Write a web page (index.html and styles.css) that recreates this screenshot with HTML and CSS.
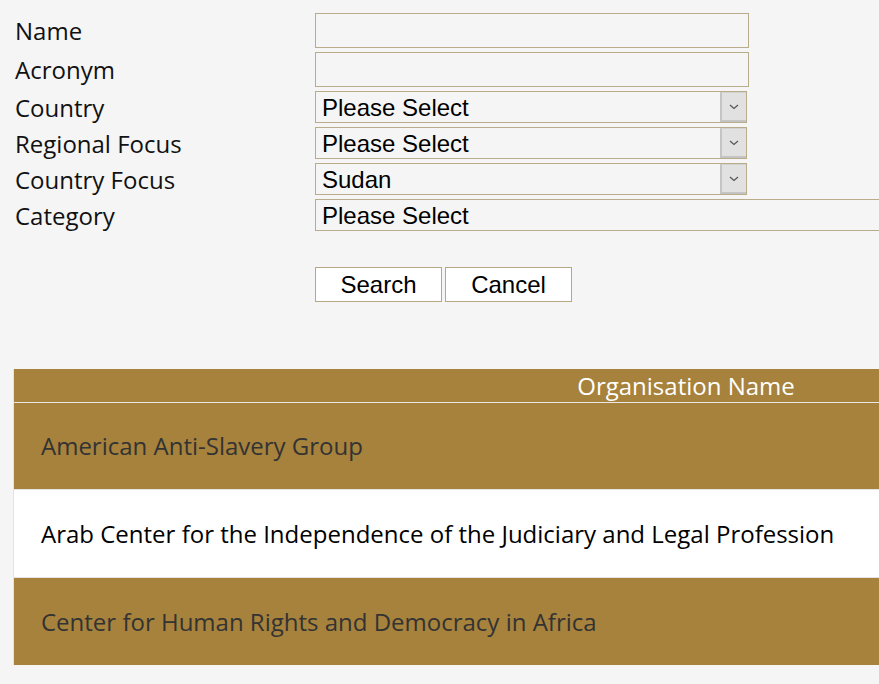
FILE: index.html
```html
<!DOCTYPE html>
<html>
<head>
<meta charset="utf-8">
<link rel="stylesheet" href="styles.css">
</head>
<body>
<form class="search-form">
  <div class="fields">
    <label class="label">Name</label>
    <input class="text-input" type="text">
    <label class="label">Acronym</label>
    <input class="text-input" type="text">
    <label class="label sel">Country</label>
    <div class="select-wrap">
      <select class="select"><option>Please Select</option></select>
      <span class="select-btn"><svg width="10" height="6" viewBox="0 0 10 6"><path d="M1 1 L5 4.5 L9 1" fill="none" stroke="#555" stroke-width="1.2"/></svg></span>
    </div>
    <label class="label sel">Regional Focus</label>
    <div class="select-wrap">
      <select class="select"><option>Please Select</option></select>
      <span class="select-btn"><svg width="10" height="6" viewBox="0 0 10 6"><path d="M1 1 L5 4.5 L9 1" fill="none" stroke="#555" stroke-width="1.2"/></svg></span>
    </div>
    <label class="label sel">Country Focus</label>
    <div class="select-wrap">
      <select class="select"><option>Sudan</option></select>
      <span class="select-btn"><svg width="10" height="6" viewBox="0 0 10 6"><path d="M1 1 L5 4.5 L9 1" fill="none" stroke="#555" stroke-width="1.2"/></svg></span>
    </div>
    <label class="label sel">Category</label>
    <div class="select-wrap wide">
      <select class="select"><option>Please Select</option></select>
    </div>
  </div>
  <div class="buttons">
    <button type="button" class="btn">Search</button>
    <button type="button" class="btn">Cancel</button>
  </div>
</form>

<table class="results">
  <thead>
    <tr><th>Organisation Name</th></tr>
  </thead>
  <tbody>
    <tr class="odd"><td>American Anti-Slavery Group</td></tr>
    <tr class="even"><td>Arab Center for the Independence of the Judiciary and Legal Profession</td></tr>
    <tr class="odd last"><td>Center for Human Rights and Democracy in Africa</td></tr>
  </tbody>
</table>
</body>
</html>
```

FILE: styles.css
```css
html, body {
  margin: 0;
  padding: 0;
  overflow-x: hidden;
}
body {
  background: #f5f5f5;
  font-family: "Open Sans", sans-serif;
  color: #111;
}
.search-form {
  padding: 13px 0 0 15px;
}
.fields {
  display: grid;
  grid-template-columns: 300px auto;
  grid-auto-rows: auto;
  row-gap: 4px;
  align-items: center;
}
.label {
  font-size: 24px;
  line-height: 32px;
  color: #111;
}
.label.sel {
  line-height: 30px;
  padding-top: 2px;
}
.text-input {
  box-sizing: border-box;
  width: 434px;
  height: 35px;
  border: 1px solid #b8ac8a;
  background: #f5f5f5;
  margin: 0;
  padding: 0 6px;
  font-family: "Liberation Sans", Arial, sans-serif;
  font-size: 24px;
}
.select-wrap {
  position: relative;
  width: 432px;
  height: 32px;
}
.select-wrap.wide {
  width: 900px;
}
.select {
  -webkit-appearance: none;
  appearance: none;
  box-sizing: border-box;
  width: 100%;
  height: 32px;
  margin: 0;
  border: 1px solid #b8ac8a;
  border-radius: 0;
  background: #f5f5f5;
  padding: 1px 6px 0;
  font-family: "Liberation Sans", Arial, sans-serif;
  font-size: 24px;
  color: #000;
  line-height: 30px;
}
.select-btn {
  position: absolute;
  top: 1px;
  right: 1px;
  width: 26px;
  height: 30px;
  box-sizing: border-box;
  background: #e1e1e1;
  border-left: 2px solid #c4c4c4;
  border-bottom: 2px solid #c4c4c4;
  border-top: 1px solid #d2d2d2;
  display: flex;
  align-items: center;
  justify-content: center;
}
.buttons {
  display: flex;
  gap: 3px;
  margin: 36px 0 0 300px;
}
.btn {
  box-sizing: border-box;
  width: 127px;
  height: 35px;
  margin: 0;
  background: #fff;
  border: 1px solid #b6a982;
  border-radius: 0;
  font-family: "Liberation Sans", Arial, sans-serif;
  font-size: 24px;
  color: #000;
  padding: 0;
}
.results {
  margin: 67px 0 0 13px;
  width: 1345px;
  border-collapse: collapse;
  border-left: 1px solid #e3e3e3;
  font-family: "Open Sans", sans-serif;
  font-size: 24px;
}
.results th {
  background: #a7823c;
  color: #fff;
  font-weight: normal;
  height: 33px;
  padding: 0;
  line-height: 33px;
  border-bottom: 1px solid #e8e8e8;
  text-align: center;
}
.results td {
  height: 86px;
  padding: 0 0 0 27px;
  line-height: 32px;
  vertical-align: middle;
}
.results tr.odd td {
  background: #a7823c;
  color: #333;
}
.results tr.even td {
  height: 87px;
  background: #fff;
  color: #000;
  border-top: 1px solid #e4e4e4;
  border-bottom: 1px solid #e4e4e4;
}
.results tr.last td {
  height: 87px;
}
```
